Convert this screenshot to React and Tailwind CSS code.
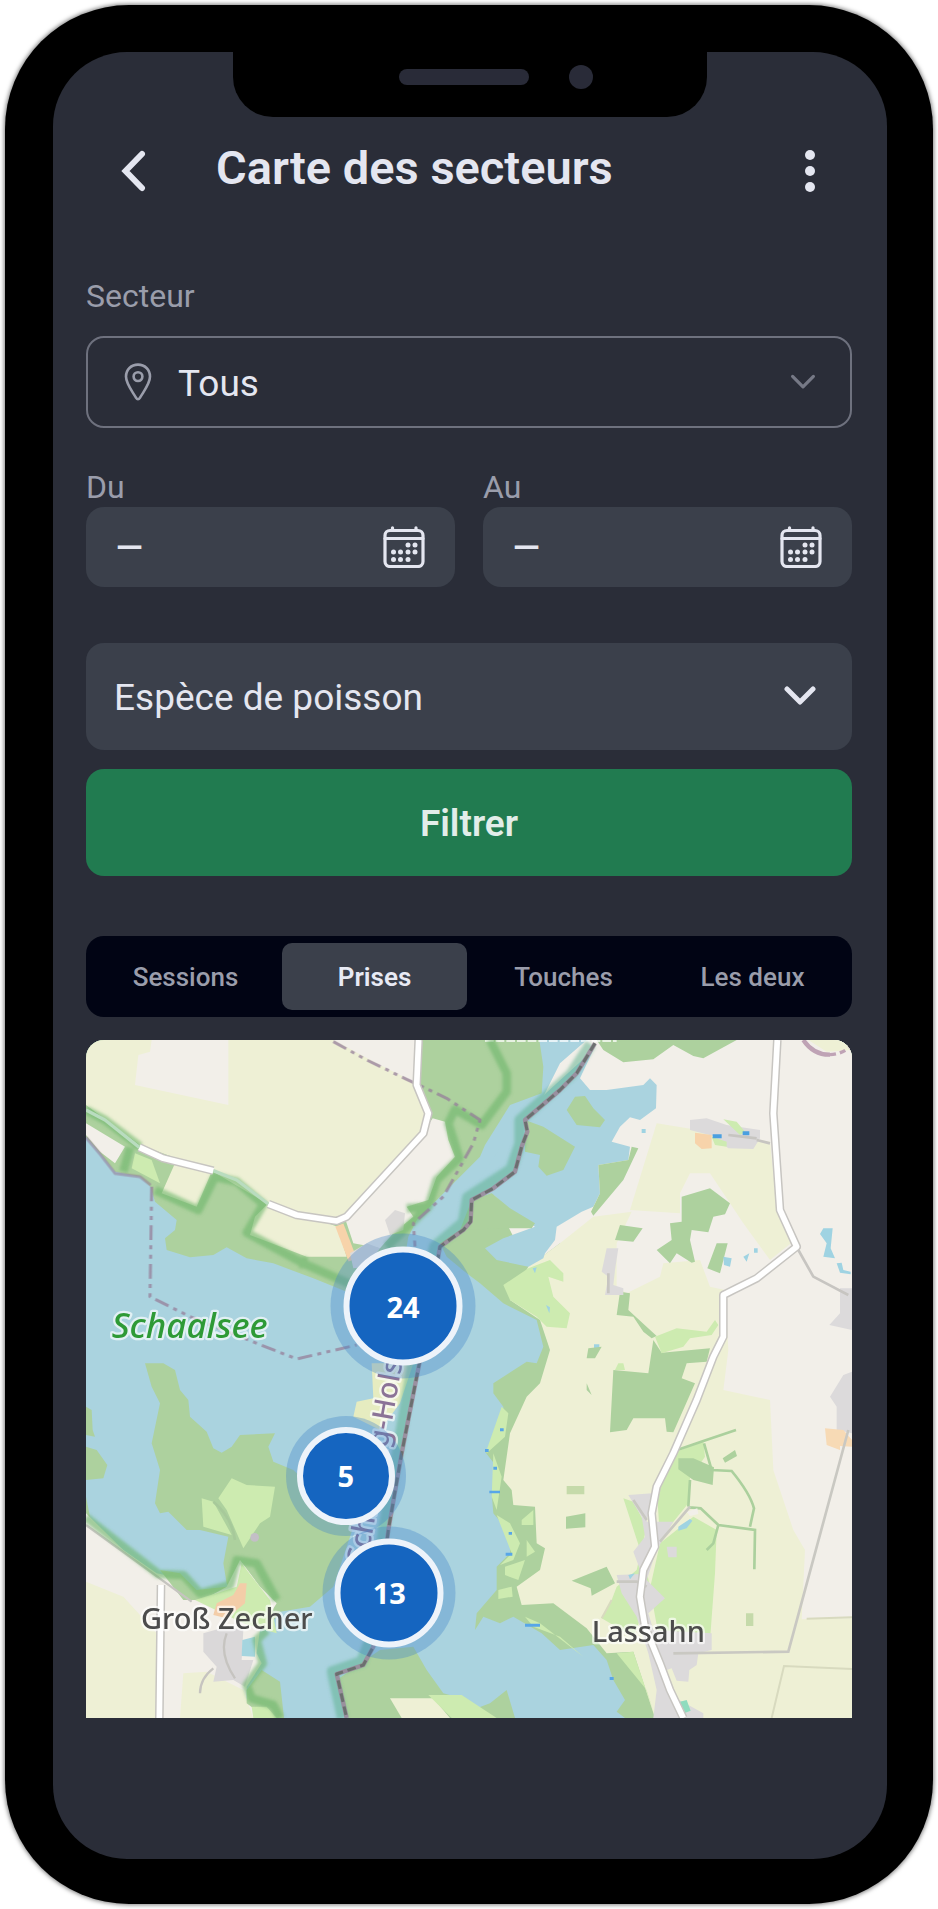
import { useState } from "react";

const TABS = ["Sessions", "Prises", "Touches", "Les deux"];

const CLUSTERS = [
  { count: 24, box: "left-[41.4%] top-[39.2%] size-[145px] p-[13px]" },
  { count: 5, box: "left-[33.9%] top-[64.3%] size-[120px] p-[11px]" },
  { count: 13, box: "left-[39.6%] top-[81.5%] size-[133px] p-[12px]" },
];

function Chevron({ className, strokeWidth }) {
  return (
    <svg viewBox="0 0 32 20" className={className} fill="none" stroke="currentColor" strokeWidth={strokeWidth} strokeLinecap="round" strokeLinejoin="round" aria-hidden="true">
      <path d="M3 3 16 16 29 3" />
    </svg>
  );
}

function PinIcon({ className }) {
  return (
    <svg viewBox="0 0 28 38" className={className} fill="none" stroke="currentColor" strokeWidth="2.6" strokeLinejoin="round" aria-hidden="true">
      <path d="M14 36.2c-.8 0-1.4-.5-1.9-1.3C7 26.500 2 20.600 2 13.600 2 6.600 7.200 1.600 14 1.600s12 5 12 12c0 7-5 12.900-10.100 21.300-.5.8-1.100 1.300-1.900 1.300Z" />
      <circle cx="14" cy="13.600" r="4.400" />
    </svg>
  );
}

function CalendarIcon({ className }) {
  const dots = [
    [25, 19], [32, 19],
    [10.5, 26], [17.5, 26], [25, 26], [32, 26],
    [10.5, 33.5], [17.5, 33.5], [25, 33.5],
  ];
  return (
    <svg viewBox="0 0 42 42" className={className} fill="none" stroke="currentColor" strokeWidth="3.2" strokeLinecap="round" aria-hidden="true">
      <rect x="2" y="4.500" width="38" height="36" rx="5" />
      <path d="M2 12.500h38M9.500 1.800v2M33 1.800v2" />
      {dots.map(([x, y]) => (
        <circle key={`${x}-${y}`} cx={x} cy={y} r="2.500" fill="currentColor" stroke="none" />
      ))}
    </svg>
  );
}

function DateField({ id, label }) {
  return (
    <div>
      <label htmlFor={id} className="block text-[32px] leading-10 text-[#9a9dab]">
        {label}
      </label>
      <div className="flex h-20 items-center rounded-[18px] bg-[#3b404b] pr-[30px] pl-[28px]">
        <input id={id} type="text" defaultValue="–" className="min-w-0 flex-1 bg-transparent text-[48px] leading-10 text-[#e4e6f0] outline-none" />
        <CalendarIcon className="size-[42px] shrink-0 text-[#e4e6f0]" />
      </div>
    </div>
  );
}

function LakeMap() {
  return (
    <svg viewBox="18 30 2298 2034" className="block h-full w-full" preserveAspectRatio="xMidYMid slice" role="img" aria-label="Schaalsee">
      <defs>
        <filter id="soft" x="-5%" y="-5%" width="110%" height="110%">
          <feGaussianBlur stdDeviation="4" />
        </filter>
      </defs>
      <rect x="18" y="30" width="2298" height="2034" fill="#aad3df" />

      {/* north-west shore */}
      <path fill="#add19e" d="M18 30V320L60 370 105 425 180 440 212 470 225 515 290 570 285 600 255 625 260 660 330 682 400 675 440 652 500 685 580 700 700 745 800 785 960 770 985 620 1010 570 1080 500 1200 380 1215 345 1290 225 1385 190 1390 110 1378 30Z" />
      <path fill="#eef0d5" d="M18 30V225L180 345 400 425 560 520 740 575 800 560 1030 310 1045 250 1010 170V30Z" />
      <path fill="#f2efe9" d="M215 30H445V225L165 165 175 75 210 65ZM760 30H1010V160L900 105Z" />
      <path fill="#f2efe9" d="M1035 300 1058 265 1095 275 1105 330 1125 380 1070 440 1045 510 980 530 1000 560 940 610 900 655 820 640 795 565ZM18 280 135 350 105 400 60 365 18 315Z" />
      <path fill="#eef0d5" d="M560 525 740 578 772 590 800 680H680L510 615 525 560ZM285 400 395 425 350 530 245 490Z" />
      <path fill="#cdebb0" d="M165 370 215 390 240 460 155 415Z" />
      <path fill="none" stroke="#f7d3aa" strokeWidth="26" d="M778 585 818 690" />
      <path fill="#dcdad9" d="M915 570 945 540 975 550 970 600 930 615ZM810 670 860 640 900 655 860 710 820 715Z" />

      {/* east shore */}
      <g transform="translate(1140 0)">
        <path fill="#add19e" d="M410 30 100 490 30 510V580L-60 640-40 680 20 730 60 760 130 820 230 870 250 950 230 1000 200 995 100 1060 100 1090 130 1130V1200L75 1265 110 1310 95 1390 100 1450 150 1510V1570L110 1610V1680L50 1750 45 1800 70 1760 120 1780 160 1760 245 1810 300 1860 400 1845 440 1890 460 1950 495 2010 470 2045 495 2064H1176V30Z" />
        <path fill="#eef0d5" d="M410 30 300 640 205 710 150 810 240 870 270 960 240 1060 200 1100 150 1210 130 1350 155 1380 160 1425 225 1430 230 1540 255 1555 240 1620 170 1670 185 1725 280 1720 380 1795 440 1870 520 1865 585 2064H1176V30Z" />
        <path fill="#f2efe9" d="M380 30H1176V1765L1025 1768 1035 1560 1000 1500 940 1320 930 1110 790 1080 805 960 795 780 750 770 720 690 610 700 600 740 500 790 470 770V640L515 545 400 560 300 640 205 710 100 500 300 100Z" />
        <path fill="#eef0d5" d="M590 280 930 335 945 480 1005 630 930 690 850 580 750 430H690L660 490V550L510 540Z" />
        <path fill="#aad3df" d="M400 60 360 145 390 180 440 180 550 165 570 145 590 165 588 235 540 270 510 262 480 290 455 335 510 350 505 390 415 405 420 490 400 530 365 545 290 590 285 630 255 670 250 685 205 710 110 690 75 655 130 625 225 590 160 550 95 490 20 510 180 260Z" />
        <path fill="#add19e" d="M95 490 150 535 225 580 215 595 130 595 0 600 35 510ZM410 30 430 60 490 97 580 88 640 45 700 78 730 85 830 30ZM320 240 345 200 375 198 400 235 435 270 420 292 350 285ZM195 270 250 290 345 350 310 420 260 437 235 410 240 375 195 365ZM415 405 505 390 515 350 535 355 490 450 400 557 393 545 420 490Z" />
        <path fill="#add19e" d="M665 500 750 475 810 520 795 553 760 560 745 607 695 600 690 630 705 695 695 698 650 670 630 700 590 660 635 630 630 580 665 575ZM480 585 548 595 520 635 465 630ZM770 640 803 640 780 730 742 715ZM480 785 510 790 505 840 590 918 575 925 550 905 520 860 470 855Z" />
        <path fill="#add19e" d="M580 930 605 968 750 955 740 995 680 1000 665 1045 705 1060 640 1207 620 1205 615 1165H520L500 1200 450 1207 460 1020 565 1030Z" />
        <path fill="#cdebb0" d="M130 765 205 715 270 690 310 730V755L265 740 280 800 330 850 320 895 260 890 230 860 150 810ZM585 920 650 895 740 905 765 870 775 885 755 915 690 925 670 950 605 970ZM475 1000 490 1000 495 1020 465 1020Z" />
        <path fill="#dcdadb" d="M690 270 740 265 800 285 900 300V325L880 357 805 355 760 318 690 300ZM440 655 475 655 465 720 460 765 490 775V795L435 795 445 740 425 725ZM1140 775 1176 775V900L1108 885 1140 850Z" />
        <path fill="#cdebb0" d="M790 268 830 275 855 305 840 315ZM755 320 800 335V350L765 345Z" />
        <path fill="#f7d3aa" d="M705 308 755 315 755 355 725 357 705 340Z" />
        <path fill="#4a9fe0" d="M758 313H785V325H758ZM848 304H868V316H848Z" />
        <path fill="#9fd3e2" d="M1090 595 1118 595 1112 655 1125 685 1090 680 1100 640 1080 612ZM1130 700 1145 698 1150 720 1172 725V733L1140 728ZM790 680 815 685 810 710 792 705ZM850 680 868 670 860 695ZM882 655 893 655V668H882ZM218 715 230 712 225 730ZM258 825 270 832 268 850ZM402 943 418 943V957H402ZM545 297H557V309H545Z" />
        <path fill="#add19e" d="M385 955 425 950 405 985 380 985ZM380 1060 395 1095 380 1080Z" />
        <path fill="#eef0d5" d="M1045 30H1176V60L1100 65Z" />
        <path fill="none" stroke="#bfa3b5" strokeWidth="13" d="M1030 30Q1060 75 1110 74" />
        <path fill="none" stroke="#bfa3b5" strokeWidth="10" strokeDasharray="18 12" d="M1110 74Q1150 72 1176 45" />
        <path fill="none" stroke="#fff" strokeWidth="8" strokeDasharray="26 6" d="M75 32H470" opacity=".7" />
      </g>

      {/* Lassahn and the coast below it */}
      <g transform="translate(1140 1020)">
        <path fill="#cdebb0" d="M490 385 520 395 560 470 530 600 470 650 455 690 425 745 520 800 560 700 600 520 700 440 770 480 765 610 750 810 600 820 560 600ZM590 350 640 250 730 212 735 260 690 325 685 400 600 505Z" />
        <path fill="#dcdadb" d="M505 375 577 370 560 455 640 455 590 540 560 630 615 685 565 730 580 780 755 790 755 840 715 850 710 885 688 900 685 935 650 932 635 895 620 900 640 980 730 1030V1044H580L590 960 565 850 530 740 485 670 470 615 545 612 520 545 555 500 545 440Z" />
        <path fill="#add19e" d="M655 265 700 265 762 292 758 345 700 330 655 298ZM318 440 376 430V472L318 476ZM788 265 825 240 831 258 795 278ZM335 632 440 590 465 640 395 677 392 655Z" />
        <path fill="#c5daaa" d="M320 348H373V373H320ZM858 730H880V768H858Z" />
        <path fill="#cdebb0" d="M125 110 145 130 135 200 80 250 80 240ZM100 250 125 320 110 420 95 380ZM110 435 150 460 180 520 160 570 120 585 155 550ZM185 450 220 420V465L185 465ZM200 510 225 545 200 560ZM135 590 195 570 175 630 135 615ZM115 660 155 650 158 680 115 687ZM195 740 240 760 370 860 300 800 220 770ZM470 850 520 845 585 1040 560 960Z" />
        <g fill="none" stroke="#abd09d" strokeWidth="8">
          <path d="M645 242 730 213 828 180M732 220 755 300 815 303Q870 370 882 415L870 470M688 412 722 415 775 465 885 480 883 598M775 465 760 520 740 540M690 330 685 410" />
        </g>
        <path fill="#58a6e8" d="M88 362H120V370H88ZM137 548H157V557H137ZM195 761H240V770H195ZM146 486H156V494H146ZM120 175H131V184H120ZM75 237H86V246H75ZM449 921H461V930H449ZM100 290H111V299H100Z" />
        <path fill="#9fd3e2" d="M655 470 690 447 697 452 680 475 655 482ZM505 615 525 610 510 628Z" />
        <path fill="#f2efe9" d="M680 425 712 415 715 432 690 438Z" />
        <path fill="#dcdadb" d="M620 530H650V562H625ZM1110 80 1150 15 1176 5V190L1130 180V110Z" />
        <path fill="#f7dab5" d="M1095 175 1150 180 1176 210V230L1140 228V240L1100 225Z" />
        <path fill="#8fdcbe" d="M660 995 680 990 692 1022 672 1030Z" />
        <path fill="none" stroke="#c9c8c2" strokeWidth="8" d="M1165 180 985 845 640 850M520 390 560 450M600 515 690 410M470 635 530 635 560 650" />
        <path fill="none" stroke="#d8dabf" strokeWidth="6" d="M1176 742 1040 746M1176 897 972 888 935 1044M455 690 425 745" />
      </g>

      {/* peninsula and Groß Zecher */}
      <g transform="translate(0 1020)">
        <path fill="#add19e" d="M195-20 250-20 285 0 300 60 325 90 330 140 380 185 400 235 425 248 455 230 480 195 585 190 565 230 580 275 640 300 820 470 760 650 690 710 600 725 560 780 480 700 440 640 430 580 445 500 360 480 320 480 265 425 240 430 225 400 240 300 215 220 240 100 215 50ZM18 110 35 120 38 180 45 200 18 195ZM18 230 50 240 82 285 70 325 18 330ZM18 380 30 440 18 450Z" />
        <path fill="#cdebb0" d="M455 325 500 345 585 350 570 440 540 460 490 535 440 420 415 385ZM365 385 400 395 455 495 370 470Z" />
        <path fill="#e6ecc0" d="M875-20H1000L960 100 900 180 820 140 830 95 880 85Z" />
        <path fill="#f2efe9" d="M18 430 130 540 230 610 300 625 350 680 440 650 480 570 540 650 590 700 540 780 530 850 545 880 500 950 500 1000 600 1044H18Z" />
        <path fill="#eef0d5" d="M18 635 130 680 230 790 228 1044H18ZM310 910 380 905 490 960 520 1044H300Z" />
        <path fill="#add19e" d="M240 600 300 610 350 660 440 650 370 690 310 690ZM500 960 545 900 600 935 612 1044H560L500 1000Z" />
        <path fill="#cdebb0" d="M345 690 470 650 485 580 570 690 590 790 490 760ZM515 1010 560 1010 590 1044H520Z" />
        <path fill="#f3cda8" d="M480 640 500 640 495 700 440 745 400 735 410 700 460 675Z" />
        <path fill="#dad8d9" d="M370 790 440 770 490 780 485 870 520 870 495 950 460 930 400 935 410 890 370 845Z" />
        <path fill="#a5d5df" d="M487 810 525 800V860L485 858Z" />
        <path fill="#add19e" d="M770 930 870 860 900 840 1000 830 1040 900 1090 970 1145 985 1190 1015 1230 1000 1280 960 1305 1044H805Z" />
        <path fill="#eef0d5" d="M930 985H1060L1110 1044H965Z" />
        <path fill="#cdebb0" d="M1045 975 1145 975 1250 1044H1115Z" />
        <path fill="none" stroke="#a7c99a" strokeWidth="8" d="M400 395Q455 440 465 510" />
        <path fill="none" stroke="#c6c4c0" strokeWidth="7" d="M18 465 335 695M440 790Q415 850 465 925M400 895Q360 925 360 970" />
        <circle cx="524" cy="502" r="13" fill="#c3bfc6" />
      </g>

      {/* nature reserve edges */}
      <g fill="none" stroke="#6db56a" strokeLinejoin="round" filter="url(#soft)">
        <path strokeWidth="26" opacity=".6" d="M18 240 75 270 180 350M150 352 130 425M225 480 355 540 405 440 470 455 550 522 500 608 670 700 810 762M670 680V715M1230 30 1280 130 1280 185 1205 285 1125 238 1105 280 1138 385 1070 450 1045 530 980 535M1045 530 920 650" />
        <path strokeWidth="26" opacity=".6" d="M18 1462 235 1632 310 1635 360 1690 450 1665 470 1590 530 1600 590 1710M560 1800 530 1830 548 1900 500 1965 515 2005 580 2025 600 2064" />
        <path strokeWidth="34" stroke="#59b08c" opacity=".5" d="M1532 42 1474 132 1320 270V340L1293 418 1163 503 1150 577 1064 650 1000 990 950 1280 910 1500 870 1830 845 1895 757 1925 788 2064" />
      </g>

      {/* borders */}
      <g fill="none" stroke="#957f9a" strokeLinejoin="round">
        <path strokeWidth="9" opacity=".75" strokeDasharray="44 16 12 16 12 16" d="M760 35 860 90 980 148 1100 205 1200 270 1180 340 1090 500 1000 580 1005 650M215 470 210 800 330 860 510 932 650 987 830 945" />
        <path strokeWidth="9" opacity=".6" d="M18 322 60 372 105 430 180 440 212 465" />
        <path strokeWidth="13" stroke="#9b8a9c" opacity=".9" d="M1545 40 1490 130 1440 180 1335 270 1342 305 1325 350 1305 425 1240 475 1175 510 1172 575 1150 600 1080 650 1020 990 965 1270 925 1500 880 1850 850 1905 770 1932 800 2064" />
        <path strokeWidth="9" stroke="#5f6663" opacity=".8" strokeDasharray="26 14" d="M1545 40 1490 130 1440 180 1335 270 1342 305 1325 350 1305 425 1240 475 1175 510 1172 575 1150 600 1080 650 1020 990 965 1270 925 1500 880 1850 850 1905 770 1932 800 2064" />
      </g>

      {/* roads */}
      <g fill="none" strokeLinejoin="round">
        <g stroke="#c7c5c1" strokeWidth="26">
          <path d="M178 352 250 385 400 422M565 522 650 555 770 573 800 560 1030 310 1045 250 1010 165 1016 30M243 1665 238 2064" />
          <path d="M2092 30 2080 250 2100 540 2150 650 2030 745 1930 795V920L1900 980 1850 1110 1780 1270 1730 1370 1715 1450 1725 1550 1690 1620 1680 1700 1695 1790 1740 1900 1770 1980 1810 2064" />
          <path strokeWidth="8" d="M2155 660 2200 740 2305 795M2030 330 2070 340M1585 730V790M1945 315 2030 325" />
        </g>
        <g stroke="#fff" strokeWidth="17">
          <path d="M178 352 250 385 400 422M565 522 650 555 770 573 800 560 1030 310 1045 250 1010 165 1016 30M243 1665 238 2064" />
          <path d="M2092 30 2080 250 2100 540 2150 650 2030 745 1930 795V920L1900 980 1850 1110 1780 1270 1730 1370 1715 1450 1725 1550 1690 1620 1680 1700 1695 1790 1740 1900 1770 1980 1810 2064" />
        </g>
        <path stroke="#b9dcbf" strokeWidth="10" d="M18 240 75 270 178 352M400 422 470 450 565 522" />
      </g>

      {/* place names */}
      <g fontFamily="'Noto Sans', sans-serif" fontWeight="500" stroke="#fff" strokeOpacity=".65" strokeWidth="14" strokeLinejoin="round" paintOrder="stroke">
        <text x="860" y="1605" fontSize="87" fill="#8b7397" transform="rotate(-80 860 1605)">Schleswig-Holstein</text>
        <text x="95" y="925" fontSize="105" fontStyle="italic" fill="#2e9a36">Schaalsee</text>
        <text x="183" y="1798" fontSize="87" fill="#4c4c4c">Groß Zecher</text>
        <text x="1535" y="1835" fontSize="87" fill="#4c4c4c">Lassahn</text>
      </g>
    </svg>
  );
}

export default function App() {
  const [tab, setTab] = useState("Prises");

  return (
    <div className="bg-white p-[5px] font-['Roboto',sans-serif]">
      {/* Phone body */}
      <div className="rounded-[124px] bg-black pt-[47px] pr-[46px] pb-[45px] pl-12 shadow-[0_0_4px_1px_rgba(0,0,0,0.5)]">
        <div className="relative rounded-[74px] bg-[#2a2d38] pr-[35px] pb-[141px] pl-[33px]">
          {/* Notch */}
          <div className="absolute top-0 left-1/2 flex h-[65px] w-[474px] -translate-x-1/2 items-center gap-10 rounded-b-[40px] bg-black pb-4 pl-[166px]">
            <span className="h-4 w-[130px] rounded-full bg-[#292b38]" />
            <span className="size-6 rounded-full bg-[#292b38]" />
          </div>

          <header className="flex items-center pt-[89px] pr-[18px] pl-6">
            <button type="button" aria-label="Retour" className="flex h-[60px] w-12 items-center justify-center text-[#e4e6f0]">
              <svg viewBox="0 0 26 42" className="h-[42px] w-[26px]" fill="none" stroke="currentColor" strokeWidth="6" strokeLinecap="round" strokeLinejoin="miter" aria-hidden="true">
                <path d="M21 4 4.500 21 21 38" />
              </svg>
            </button>
            <h1 className="ml-[58px] flex-1 pb-1.5 text-[47px] leading-[54px] font-semibold text-[#e4e6f0]">Carte des secteurs</h1>
            <button type="button" aria-label="Menu" className="flex h-[60px] w-12 flex-col items-center justify-center gap-1.5 text-[#e4e6f0]">
              <span className="size-2.5 rounded-full bg-current" />
              <span className="size-2.5 rounded-full bg-current" />
              <span className="size-2.5 rounded-full bg-current" />
            </button>
          </header>

          <main>
            {/* Filters */}
            <form className="pt-[75px]" onSubmit={(e) => e.preventDefault()}>
              <label htmlFor="secteur" className="block text-[32px] leading-10 text-[#9a9dab]">
                Secteur
              </label>
              <div className="relative mt-5">
                <select id="secteur" className="block h-[92px] w-full appearance-none rounded-[18px] border-2 border-[#6e717e] bg-transparent pt-1 pl-[90px] text-[37px] text-[#e4e6f0] outline-none">
                  <option>Tous</option>
                </select>
                <PinIcon className="pointer-events-none absolute top-[27px] left-[38px] h-[38px] w-7 text-[#9a9dab]" />
                <Chevron strokeWidth={4} className="pointer-events-none absolute top-[38px] right-9 h-4 w-[26px] text-[#767986]" />
              </div>

              <div className="mt-[39px] grid grid-cols-2 gap-7">
                <DateField id="du" label="Du" />
                <DateField id="au" label="Au" />
              </div>

              <div className="relative mt-14">
                <select aria-label="Espèce de poisson" className="block h-[107px] w-full appearance-none rounded-[18px] bg-[#3b404b] pt-0.5 pl-7 text-[37px] text-[#e4e6f0] outline-none">
                  <option>Espèce de poisson</option>
                </select>
                <Chevron strokeWidth={5} className="pointer-events-none absolute top-[43px] right-9 h-5 w-8 text-[#e4e6f0]" />
              </div>

              <button type="submit" className="mt-[19px] block h-[107px] w-full rounded-[18px] bg-[#217b50] pt-0.5 text-[37px] font-semibold text-[#e2ede9]">
                Filtrer
              </button>
            </form>

            <div role="tablist" className="mt-[60px] grid h-[81px] grid-cols-4 gap-1 rounded-[18px] bg-[#010414] p-[7px]">
              {TABS.map((name) => (
                <button
                  key={name}
                  type="button"
                  role="tab"
                  aria-selected={tab === name}
                  onClick={() => setTab(name)}
                  className={
                    tab === name
                      ? "rounded-[10px] bg-[#3b404b] pt-0.5 text-[26px] font-semibold text-[#e8eaf4]"
                      : "rounded-[10px] pt-0.5 text-[26px] font-medium text-[#9a9dab]"
                  }
                >
                  {name}
                </button>
              ))}
            </div>

            {/* Map */}
            <div className="relative mt-[23px] aspect-[766/678] overflow-hidden rounded-t-[18px]">
              <LakeMap />
              {CLUSTERS.map(({ count, box }) => (
                <button key={count} type="button" className={`absolute -translate-x-1/2 -translate-y-1/2 rounded-full bg-[#4385c9]/35 ${box}`}>
                  <span className="flex size-full items-center justify-center rounded-full border-6 border-[#edf3fa] bg-[#1565c0] font-['Open_Sans',sans-serif] text-[29px] font-bold text-white">
                    {count}
                  </span>
                </button>
              ))}
            </div>
          </main>
        </div>
      </div>
    </div>
  );
}
